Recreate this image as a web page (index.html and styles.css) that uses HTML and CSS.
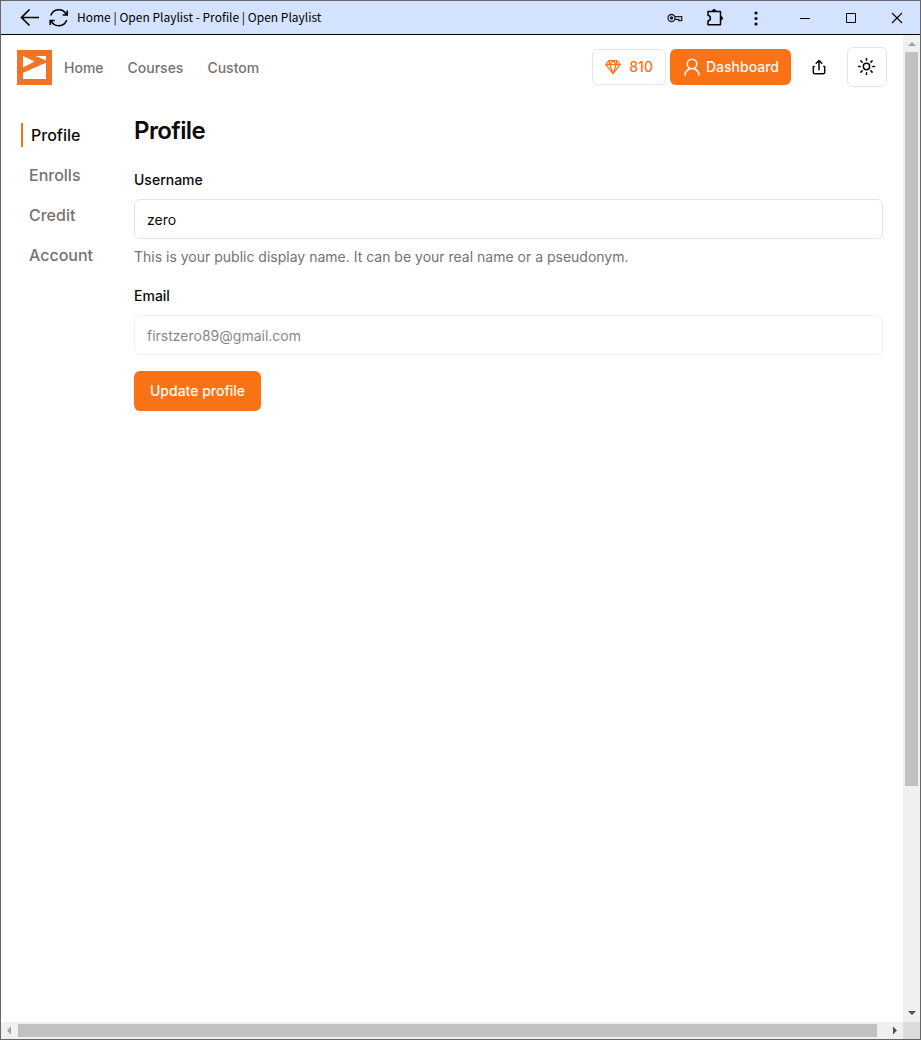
FILE: index.html
```html
<!DOCTYPE html>
<html lang="en">
<head>
<meta charset="utf-8">
<title>Profile | Open Playlist</title>
<link rel="stylesheet" href="styles.css">
</head>
<body>
<div class="window">
  <div class="titlebar">
    <button class="chrome-btn" aria-label="Back"><svg width="20" height="20" viewBox="0 0 20 20" fill="none" stroke="#000" stroke-width="1.7"><path d="M19 9.500H1.500M9.500 1.500l-8 8 8 8"/></svg></button>
    <button class="chrome-btn reload" aria-label="Reload"><svg width="20" height="20" viewBox="0 0 20 20" fill="none" stroke="#000" stroke-width="1.6"><path d="M1.800 7.500A8.400 8.400 0 0 1 17.300 6.500M17.700 12A8.400 8.400 0 0 1 2.200 13M18.200 2.500v4.500h-4.500M1.200 17v-4.500h4.500"/></svg></button>
    <span class="window-title">Home | Open Playlist - Profile | Open Playlist</span>
    <div class="browser-tools">
      <button class="chrome-btn" aria-label="Passwords"><svg width="16" height="16" viewBox="0 0 16 16" fill="none" stroke="#222" stroke-width="1.300"><circle cx="4.500" cy="8" r="3.500"/><circle cx="4.500" cy="8" r="1.100" fill="#222"/><path d="M8 6.700h6.700v4h-3V9.300H8"/></svg></button>
      <button class="chrome-btn" aria-label="Extensions"><svg width="18" height="18" viewBox="0 0 18 18" fill="none" stroke="#000" stroke-width="1.500" stroke-linejoin="round"><path d="M2 2.500h12.500v13.300H2v-3.800c3.200-.8 3.200-4.900 0-5.700z"/><path d="M6.500 2.200a1.700 1.700 0 0 1 3.400 0zM14.800 7.600a1.700 1.700 0 0 1 0 3.400z" fill="#000" stroke-width="1"/></svg></button>
      <button class="chrome-btn" aria-label="Menu"><svg width="18" height="18" viewBox="0 0 18 18"><circle cx="9" cy="4" r="1.600"/><circle cx="9" cy="9.500" r="1.600"/><circle cx="9" cy="15" r="1.600"/></svg></button>
    </div>
    <div class="window-tools">
      <button class="chrome-btn" aria-label="Minimize"><svg width="12" height="12" viewBox="0 0 12 12" stroke="#000"><path d="M1 6.500h10"/></svg></button>
      <button class="chrome-btn" aria-label="Maximize"><svg width="12" height="12" viewBox="0 0 12 12" fill="none" stroke="#000"><path d="M1.500 1.500h9v9h-9z"/></svg></button>
      <button class="chrome-btn" aria-label="Close"><svg width="12" height="12" viewBox="0 0 12 12" stroke="#000" stroke-width="1.100"><path d="m1 1 10 10M11 1 1 11"/></svg></button>
    </div>
  </div>

  <div class="page">
    <header class="site-header">
      <a class="logo" href="#" aria-label="Open Playlist"><svg width="35" height="35" viewBox="0 0 35 35"><path fill="#f07427" d="M0 0h35v35H0z"/><path fill="#fff" d="M6 6l11.500 5.500L6 17.500zM18.500 6H29v4.500zM29 12.800V29H6v-6.300z"/></svg></a>
      <nav class="main-nav">
        <a href="#">Home</a>
        <a href="#">Courses</a>
        <a href="#">Custom</a>
      </nav>
      <div class="actions">
        <button class="btn outline credit"><svg width="16" height="16" viewBox="0 0 16 16" fill="none" stroke="currentColor" stroke-width="1.200" stroke-linejoin="round"><path d="M4 1.700h8l3.200 4L8 14.600.8 5.700zM.8 5.700h14.400M4.900 5.700 8 14.600l3.100-8.900L8 1.700zM4 1.700l.9 4M12 1.700l-.9 4"/></svg>810</button>
        <button class="btn primary dashboard"><svg width="18" height="18" viewBox="0 0 18 18" fill="none" stroke="currentColor" stroke-width="1.500" stroke-linecap="round"><circle cx="9" cy="6" r="4.800"/><path d="M1.800 17c.6-3.300 2.500-5.300 5-6.300M16.200 17c-.6-3.300-2.500-5.300-5-6.300"/></svg>Dashboard</button>
        <button class="btn share" aria-label="Share"><svg width="16" height="16" viewBox="0 0 16 16" fill="none" stroke="currentColor" stroke-width="1.500" stroke-linecap="round" stroke-linejoin="round"><path d="M3.200 7.500h-.9v5.700c0 1 .5 1.500 1.500 1.500h8.400c1 0 1.500-.5 1.500-1.500V7.500h-.9M8 10.800V1.500M5.200 4.200 8 1.500l2.800 2.700"/></svg></button>
        <button class="btn outline theme" aria-label="Toggle theme"><svg width="20" height="20" viewBox="0 0 20 20" fill="none" stroke="currentColor" stroke-width="1.500" stroke-linecap="round"><circle cx="9.500" cy="9.500" r="3.200"/><path d="M9.500 1.500v1.700M9.500 15.800v1.700M1.500 9.500h1.700M15.800 9.500h1.700M3.900 3.900l1.200 1.200M13.900 13.900l1.200 1.200M3.900 15.100l1.200-1.200M13.900 5.100l1.200-1.200"/></svg></button>
      </div>
    </header>

    <div class="content">
      <nav class="side-nav">
        <a class="current" href="#" aria-current="page">Profile</a>
        <a href="#">Enrolls</a>
        <a href="#">Credit</a>
        <a href="#">Account</a>
      </nav>
      <main>
        <h1>Profile</h1>
        <form class="profile-form">
          <div class="field">
            <label for="username">Username</label>
            <input id="username" type="text" value="zero">
            <p class="hint">This is your public display name. It can be your real name or a pseudonym.</p>
          </div>
          <div class="field email">
            <label for="email">Email</label>
            <input id="email" type="email" value="firstzero89@gmail.com" disabled>
          </div>
          <button class="btn primary submit" type="button">Update profile</button>
        </form>
      </main>
    </div>
  </div>

  <div class="scrollbar vertical">
    <svg class="arrow muted" viewBox="0 0 17 17"><path d="M5 11h8L9 7z"/></svg>
    <div class="track"><div class="thumb"></div></div>
    <svg class="arrow" viewBox="0 0 17 17"><path d="M5 6h8l-4 4z"/></svg>
  </div>
  <div class="scrollbar horizontal">
    <svg class="arrow muted" viewBox="0 0 17 17"><path d="M10 4.500v8l-4-4z"/></svg>
    <div class="track"><div class="thumb"></div></div>
    <svg class="arrow" viewBox="0 0 17 17"><path d="M7 4.500v8l4-4z"/></svg>
  </div>
  <div class="corner"></div>
</div>
</body>
</html>
```
FILE: styles.css
```css
* {
  box-sizing: border-box;
}

body {
  margin: 0;
  font-family: Inter, "Liberation Sans", sans-serif;
  color: #0c0a09;
}

a {
  text-decoration: none;
}

button {
  font: inherit;
  border: 0;
  background: none;
  padding: 0;
  cursor: pointer;
}

svg {
  display: block;
  flex-shrink: 0;
}

.window {
  min-height: 100vh;
  border: 1px solid #66676c;
  display: grid;
  grid-template-columns: 1fr 17px;
  grid-template-rows: auto 1fr 17px;
  background: #fff;
}

/* Window title bar */
.titlebar {
  grid-column: 1 / -1;
  height: 34px;
  padding: 0 17px 0 19px;
  display: flex;
  align-items: center;
  background: #d3e3fd;
  border-bottom: 1px solid #000;
}

.chrome-btn {
  display: flex;
}

.reload {
  margin: 0 8px 0 9px;
}

.window-title {
  padding-bottom: 2px;
  font: 12px/20px "Noto Sans CJK KR", "Noto Sans", sans-serif;
  color: #000;
  white-space: nowrap;
}

.browser-tools {
  margin-left: auto;
  display: flex;
  align-items: center;
  gap: 23px;
}

.window-tools {
  margin-left: 34px;
  display: flex;
  align-items: center;
  gap: 34px;
}

/* Site header */
.site-header {
  height: 64px;
  padding: 0 16px;
  display: flex;
  align-items: center;
}

.main-nav {
  display: flex;
  gap: 24px;
  margin-left: 12px;
  padding-top: 2px;
  font-size: 14px;
  line-height: 20px;
  font-weight: 500;
}

.main-nav a,
.side-nav a {
  color: #78716c;
}

.actions {
  display: flex;
  align-items: center;
  gap: 4px;
  margin-left: auto;
}

.btn {
  height: 36px;
  display: flex;
  align-items: center;
  justify-content: center;
  gap: 8px;
  border-radius: 6px;
  font-size: 14px;
  line-height: 20px;
  font-weight: 500;
}

.outline {
  border: 1px solid #e7e5e4;
}

.primary {
  background: #f97316;
  color: #fafaf9;
}

.credit {
  padding: 0 12px;
  color: #f97316;
}

.dashboard {
  padding: 0 12px 0 13px;
  gap: 5px;
}

.share {
  width: 48px;
  color: #0c0a09;
}

.theme {
  width: 40px;
  height: 40px;
  color: #0c0a09;
}

/* Profile page */
.content {
  padding: 16px 20px;
  display: grid;
  grid-template-columns: 97px 1fr;
  gap: 16px;
}

.side-nav {
  display: flex;
  flex-direction: column;
  gap: 16px;
  padding-top: 8px;
  font-size: 16px;
  line-height: 24px;
  font-weight: 500;
}

.side-nav a {
  padding-left: 8px;
}

.side-nav .current {
  color: #0c0a09;
  border-left: 2px solid #f97316;
}

h1 {
  margin: 0 0 23px;
  font-size: 24px;
  line-height: 32px;
  font-weight: 600;
  letter-spacing: -0.025em;
}

.field {
  display: flex;
  flex-direction: column;
  gap: 8px;
  font-size: 14px;
  line-height: 20px;
}

.field label {
  padding-bottom: 1px;
  font-weight: 500;
}

.field input {
  width: 100%;
  height: 40px;
  padding: 0 12px;
  border: 1px solid #e7e5e4;
  border-radius: 6px;
  background: #fff;
  font: inherit;
  color: #0c0a09;
}

.field input:disabled {
  opacity: 0.5;
}

.hint {
  margin: 0;
  color: #78716c;
}

.email {
  margin-top: 19px;
}

.submit {
  height: 40px;
  margin-top: 16px;
  padding: 0 16px;
}

/* Scroll bars */
.scrollbar {
  display: flex;
  background: #f0f0f0;
}

.vertical {
  flex-direction: column;
}

.arrow {
  width: 17px;
  height: 17px;
  fill: #505050;
}

.muted {
  fill: #a0a0a0;
}

.track {
  flex: 1;
}

.thumb {
  background: #c1c1c1;
}

.vertical .track {
  padding: 0 2px;
}

.vertical .thumb {
  height: 77%;
}

.horizontal .track {
  padding: 2px 0;
}

.horizontal .thumb {
  width: 99%;
  height: 13px;
}

.corner {
  background: #dcdcdc;
}
```
